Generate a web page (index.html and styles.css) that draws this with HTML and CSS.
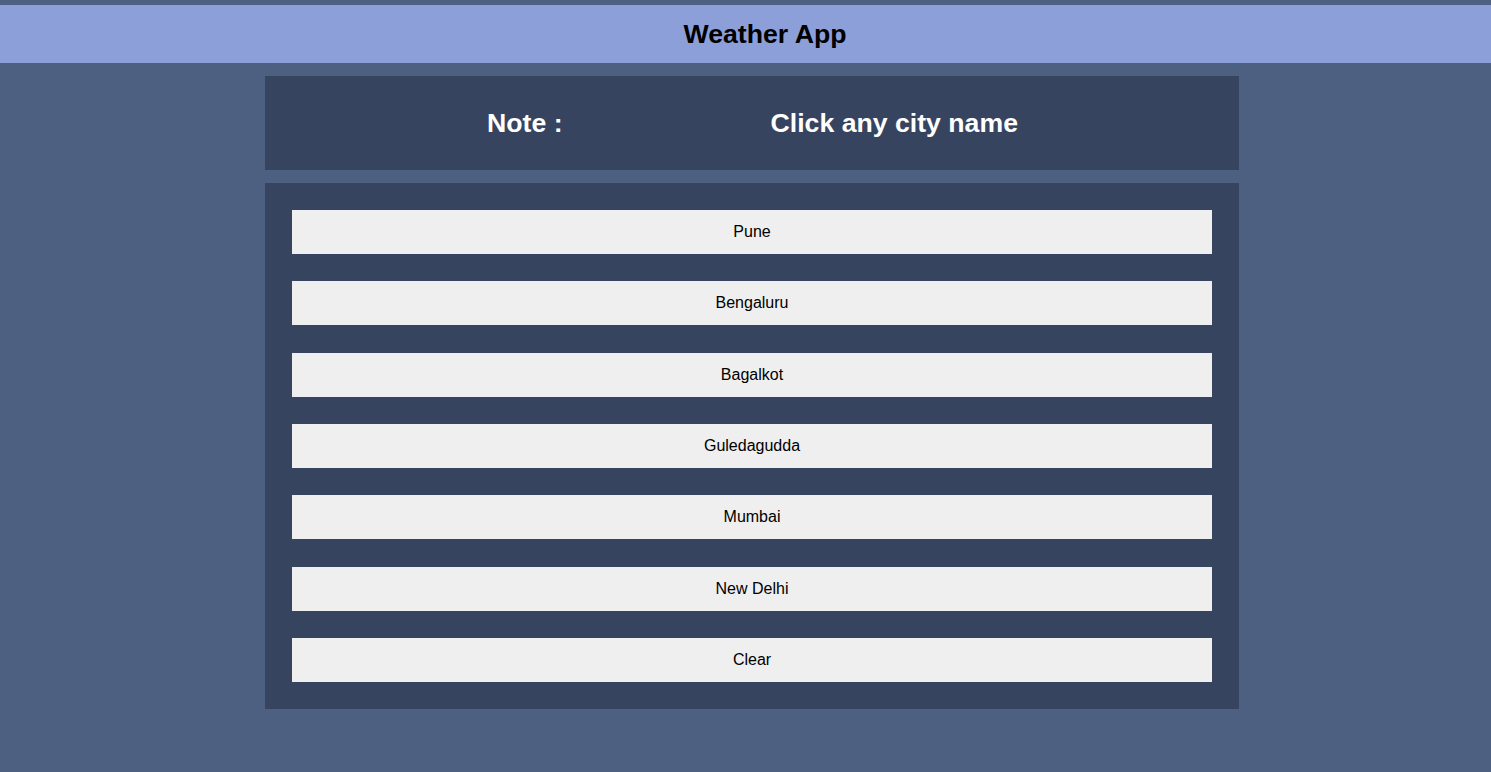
FILE: index.html
```html
<!DOCTYPE html>
<html lang="en">
<head>
<meta charset="utf-8">
<title>Weather App</title>
<link rel="stylesheet" href="styles.css">
</head>
<body>
<header class="app-header">
  <h1 class="app-title">Weather App</h1>
</header>
<main class="main">
  <div class="container">
    <section class="note-panel">
      <span class="note-label">Note :</span>
      <span class="note-text">Click any city name</span>
    </section>
    <section class="city-panel">
      <button class="city-btn">Pune</button>
      <button class="city-btn">Bengaluru</button>
      <button class="city-btn">Bagalkot</button>
      <button class="city-btn">Guledagudda</button>
      <button class="city-btn">Mumbai</button>
      <button class="city-btn">New Delhi</button>
      <button class="city-btn">Clear</button>
    </section>
  </div>
</main>
</body>
</html>
```

FILE: styles.css
```css
* {
  box-sizing: border-box;
}

html, body {
  margin: 0;
  padding: 0;
}

body {
  background: #4e6082;
  font-family: "Liberation Sans", Arial, sans-serif;
  min-height: 772px;
  padding-top: 5px;
}

.app-header {
  background: #8c9fd9;
  height: 58px;
  display: flex;
  align-items: center;
  justify-content: center;
  padding-left: 39px;
}

.app-title {
  margin: 0;
  font-size: 26.67px;
  font-weight: bold;
  color: #000;
  line-height: 1;
}

.main {
  padding-left: 13px;
  padding-top: 13px;
}

.container {
  width: 974px;
  margin: 0 auto;
  display: flex;
  flex-direction: column;
  gap: 13px;
}

.note-panel {
  background: #37445f;
  height: 94px;
  display: flex;
  align-items: center;
  padding-left: 222px;
  gap: 208px;
  color: #fff;
  font-size: 26.67px;
  font-weight: bold;
}

.city-panel {
  background: #37445f;
  padding: 27px;
  display: flex;
  flex-direction: column;
  gap: 27.33px;
}

.city-btn {
  display: block;
  width: 100%;
  height: 44px;
  background: #efefef;
  border: none;
  margin: 0;
  padding: 0;
  font-family: "Liberation Sans", Arial, sans-serif;
  font-size: 16px;
  color: #000;
  cursor: pointer;
}
```
